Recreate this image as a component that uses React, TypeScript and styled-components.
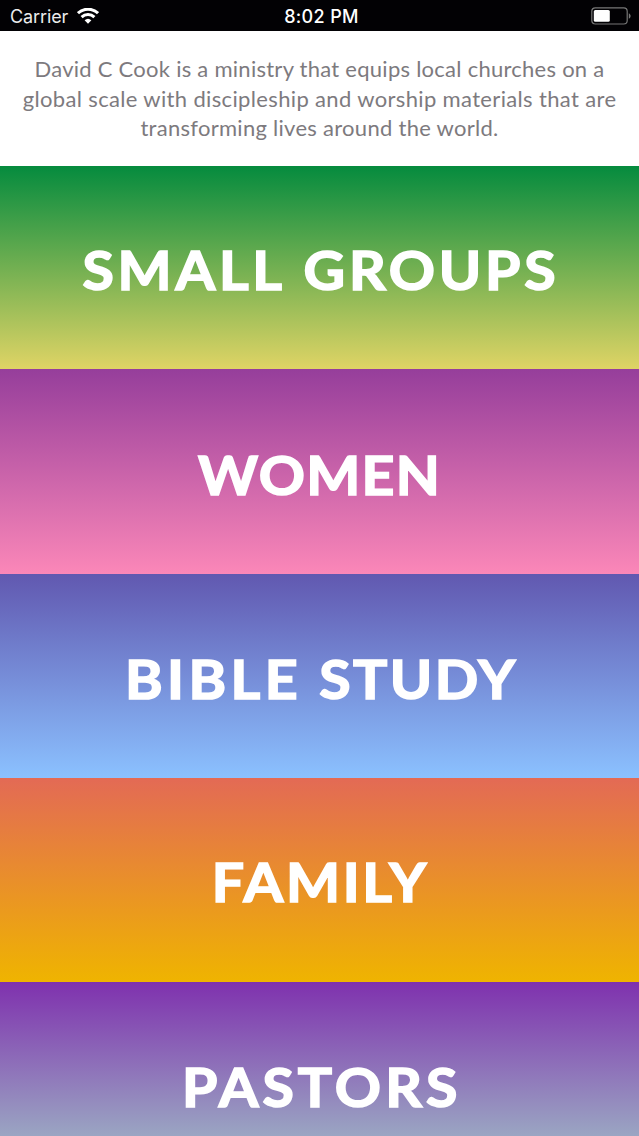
import React from "react";
import styled, { createGlobalStyle } from "styled-components";

const GlobalStyle = createGlobalStyle`
  * { box-sizing: border-box; }
  body { margin: 0; background: #fff; overflow: hidden; }
`;

const Screen = styled.div`
  width: 639px;
  height: 1136px;
  overflow: hidden;
  display: flex;
  flex-direction: column;
  background: #fff;
`;

const StatusBar = styled.header`
  flex: none;
  height: 31px;
  padding: 1px 8px 0 10px;
  display: grid;
  grid-template-columns: 1fr auto 1fr;
  align-items: center;
  background: #020104;
  color: #fff;
  font-family: Inter, sans-serif;
  font-size: 18px;
`;

const Carrier = styled.div`
  display: flex;
  align-items: center;
  gap: 9px;
  color: #ececec;
  letter-spacing: -0.1px;
`;

const Time = styled.div`
  padding-left: 2px;
  font-weight: 500;
  letter-spacing: 0.35px;
`;

const Battery = styled.div`
  display: flex;
  justify-content: flex-end;
`;

const Intro = styled.section`
  flex: none;
  height: 135px;
  padding-top: 23px;
  text-align: center;
  color: #7d7a7e;
  font-family: Lato, sans-serif;
  font-size: 22px;
  line-height: 29.5px;
`;

const Line = styled.div<{ $spacing: number }>`
  letter-spacing: ${(p) => p.$spacing}px;
  white-space: nowrap;
`;

const Banner = styled.section<{ $from: string; $to: string; $height: number; $drop: number }>`
  flex: none;
  height: ${(p) => p.$height}px;
  padding-top: ${(p) => p.$drop}px;
  display: flex;
  align-items: center;
  justify-content: center;
  background: linear-gradient(${(p) => p.$from}, ${(p) => p.$to});
`;

const Title = styled.h2<{ $spacing: number }>`
  margin: 0 ${(p) => -p.$spacing}px 0 0;
  color: #fff;
  font-family: Lato, sans-serif;
  font-weight: 700;
  font-size: 54px;
  line-height: 66px;
  letter-spacing: ${(p) => p.$spacing}px;
  white-space: nowrap;
  -webkit-text-stroke: 1.6px #fff;
  transform: scaleX(1.06);
`;

const Word = styled.span<{ $spacing: number }>`
  letter-spacing: ${(p) => p.$spacing}px;
`;

const intro = [
  { text: "David C Cook is a ministry that equips local churches on a", spacing: 0.26 },
  { text: "global scale with discipleship and worship materials that are", spacing: 0.35 },
  { text: "transforming lives around the world.", spacing: 0.28 },
];

const banners = [
  { words: [["SMALL", 3.5], ["GROUPS", 3.5]], from: "#058b3e", to: "#dfd465", height: 203, drop: 4, spacing: 3.7 },
  { words: [["WOMEN", 1.2]], from: "#963e9b", to: "#fb87b8", height: 205, drop: 6, spacing: 1.2 },
  { words: [["BIBLE", 4.2], ["STUDY", 2.3]], from: "#6158b0", to: "#8bc1ff", height: 204, drop: 6, spacing: 3 },
  { words: [["FAMILY", 2.5]], from: "#e36a55", to: "#efb400", height: 204, drop: 4, spacing: 2.5 },
  { words: [["PASTORS", 3.8]], from: "#7f31ae", to: "#a3cbc9", height: 204, drop: 5, spacing: 3.8 },
] as {
  words: [string, number][];
  from: string;
  to: string;
  height: number;
  drop: number;
  spacing: number;
}[];

export default function App() {
  return (
    <Screen>
      <GlobalStyle />
      <StatusBar>
        <Carrier>
          <span>Carrier</span>
          <svg width="22" height="16" viewBox="0 0 22 16" fill="none" stroke="#fff" strokeWidth="3">
            <path d="M1 5.2a14.5 14.5 0 0 1 20 0M4.6 9.2a9.2 9.2 0 0 1 12.8 0" />
            <path d="M7.6 12.3a5 5 0 0 1 6.8 0L11 15.8z" fill="#fff" stroke="none" />
          </svg>
        </Carrier>
        <Time>8:02 PM</Time>
        <Battery>
          <svg width="40" height="18" viewBox="0 0 40 18">
            <rect x="0.8" y="0.8" width="35.4" height="16.2" rx="3.5" fill="none" stroke="#777" strokeWidth="1.2" />
            <rect x="2.8" y="3" width="16" height="11.8" rx="1.5" fill="#fff" />
            <path d="M37.8 6.2c2.4 1 2.4 4.6 0 5.6z" fill="#777" />
          </svg>
        </Battery>
      </StatusBar>
      <Intro>
        {intro.map((l) => (
          <Line key={l.text} $spacing={l.spacing}>{l.text}</Line>
        ))}
      </Intro>
      {banners.map((b) => (
        <Banner key={b.from} $from={b.from} $to={b.to} $height={b.height} $drop={b.drop}>
          <Title $spacing={b.spacing}>
            {b.words.map(([word, spacing], i) => (
              <React.Fragment key={word}>
                {i > 0 && " "}
                <Word $spacing={spacing}>{word}</Word>
              </React.Fragment>
            ))}
          </Title>
        </Banner>
      ))}
    </Screen>
  );
}
